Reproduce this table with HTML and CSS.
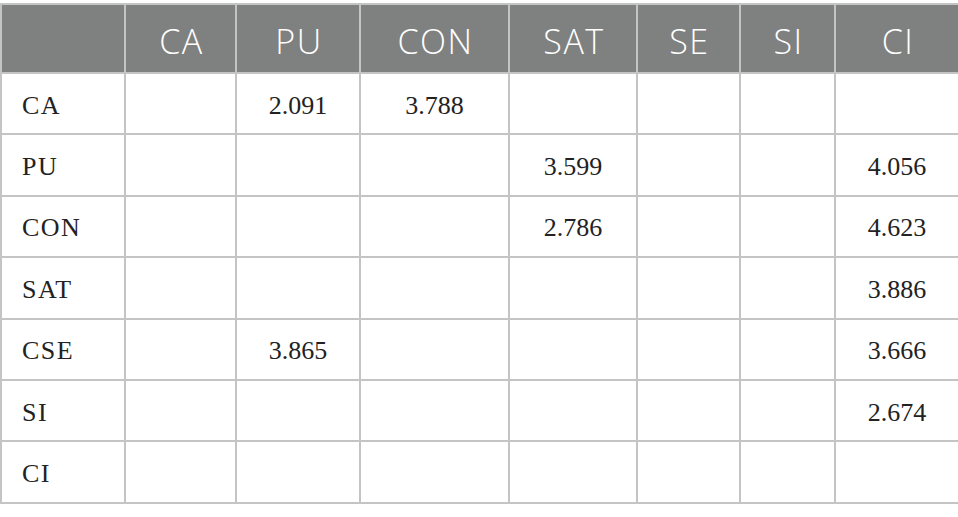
FILE: index.html
```html
<!DOCTYPE html>
<html>
<head>
<meta charset="utf-8">
<link rel="stylesheet" href="styles.css">
</head>
<body>
<table class="matrix">
  <colgroup>
    <col class="c0"><col class="c1"><col class="c2"><col class="c3"><col class="c4"><col class="c5"><col class="c6"><col class="c7">
  </colgroup>
  <thead>
    <tr>
      <th></th><th>CA</th><th>PU</th><th>CON</th><th>SAT</th><th>SE</th><th>SI</th><th>CI</th>
    </tr>
  </thead>
  <tbody>
    <tr><td class="label">CA</td><td></td><td>2.091</td><td>3.788</td><td></td><td></td><td></td><td></td></tr>
    <tr><td class="label">PU</td><td></td><td></td><td></td><td>3.599</td><td></td><td></td><td>4.056</td></tr>
    <tr><td class="label">CON</td><td></td><td></td><td></td><td>2.786</td><td></td><td></td><td>4.623</td></tr>
    <tr><td class="label">SAT</td><td></td><td></td><td></td><td></td><td></td><td></td><td>3.886</td></tr>
    <tr><td class="label">CSE</td><td></td><td>3.865</td><td></td><td></td><td></td><td></td><td>3.666</td></tr>
    <tr><td class="label">SI</td><td></td><td></td><td></td><td></td><td></td><td></td><td>2.674</td></tr>
    <tr><td class="label">CI</td><td></td><td></td><td></td><td></td><td></td><td></td><td></td></tr>
  </tbody>
</table>
</body>
</html>
```
FILE: styles.css
```css
html, body {
  margin: 0;
  padding: 0;
  background: #ffffff;
}

body {
  padding-top: 3px;
}

.matrix {
  width: 958px;
  border-collapse: collapse;
  table-layout: fixed;
}

.c0 { width: 124px; }
.c1 { width: 111px; }
.c2 { width: 124px; }
.c3 { width: 149px; }
.c4 { width: 128px; }
.c5 { width: 103px; }
.c6 { width: 95px; }
.c7 { width: 124px; }

.matrix th,
.matrix td {
  border: 2px solid #c4c4c4;
  padding: 0;
  text-align: center;
}

.matrix thead tr {
  height: 69px;
}

.matrix th {
  background: #7f8180;
  color: #ffffff;
  font-family: "Open Sans", "DejaVu Sans", sans-serif;
  font-weight: 350;
  font-size: 34px;
  letter-spacing: 1.5px;
  line-height: 1;
  padding-top: 5px;
  padding-left: 2px;
}

.matrix tbody tr {
  height: 61.4px;
}

.matrix td {
  font-family: "Liberation Serif", "Times New Roman", serif;
  font-size: 26px;
  color: #222222;
  line-height: 1;
  padding-top: 4px;
}

.matrix td.label {
  text-align: left;
  padding-left: 20px;
  letter-spacing: 1.5px;
}
```
